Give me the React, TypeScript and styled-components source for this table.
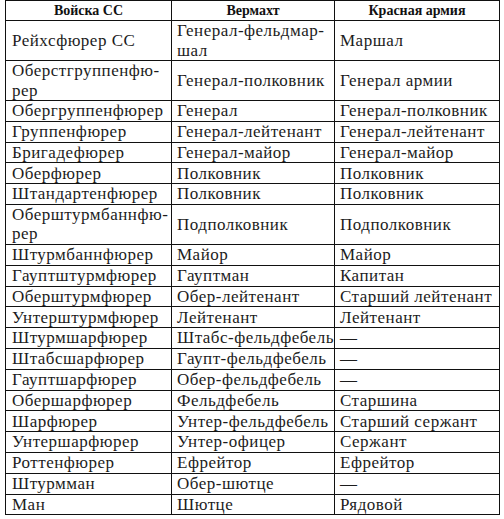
import React from "react";
import styled, { createGlobalStyle } from "styled-components";

const Global = createGlobalStyle`
  html, body { margin: 0; padding: 0; background: #fff; }
  body { font-family: "Liberation Serif", "Times New Roman", serif; color: #1a1a1a; }
`;

const Page = styled.div`
  padding: 0 0 0 5px;
`;

const Grid = styled.div`
  display: grid;
  grid-template-columns: 165px 162px 164px;
  gap: 1px;
  padding: 1px;
  width: max-content;
  background: #111;
`;

const HeadCell = styled.div`
  background: #fff;
  font-family: "Liberation Serif", "Times New Roman", serif;
  font-weight: bold;
  font-size: 14px;
  line-height: 19px;
  height: 19px;
  text-align: center;
  color: #111;
`;

const Cell = styled.div<{ $first?: boolean }>`
  background: #fff;
  display: flex;
  flex-direction: column;
  justify-content: center;
  font-family: "Liberation Serif", "Times New Roman", serif;
  font-size: 17px;
  letter-spacing: 0.5px;
  line-height: 19.2px;
  padding: 0.3px 2px 0.3px ${(p) => (p.$first ? 6 : 5)}px;
  color: #1c1c1c;
  white-space: nowrap;
  overflow: hidden;
`;

const rows: [string, string, string][] = [
  ["Рейхсфюрер СС", "Генерал-фельдмар-\nшал", "Маршал"],
  ["Оберстгруппенфю-\nрер", "Генерал-полковник", "Генерал армии"],
  ["Обергруппенфюрер", "Генерал", "Генерал-полковник"],
  ["Группенфюрер", "Генерал-лейтенант", "Генерал-лейтенант"],
  ["Бригадефюрер", "Генерал-майор", "Генерал-майор"],
  ["Оберфюрер", "Полковник", "Полковник"],
  ["Штандартенфюрер", "Полковник", "Полковник"],
  ["Оберштурмбаннфю-\nрер", "Подполковник", "Подполковник"],
  ["Штурмбаннфюрер", "Майор", "Майор"],
  ["Гауптштурмфюрер", "Гауптман", "Капитан"],
  ["Оберштурмфюрер", "Обер-лейтенант", "Старший лейтенант"],
  ["Унтерштурмфюрер", "Лейтенант", "Лейтенант"],
  ["Штурмшарфюрер", "Штабс-фельдфебель", "—"],
  ["Штабсшарфюрер", "Гаупт-фельдфебель", "—"],
  ["Гауптшарфюрер", "Обер-фельдфебель", "—"],
  ["Обершарфюрер", "Фельдфебель", "Старшина"],
  ["Шарфюрер", "Унтер-фельдфебель", "Старший сержант"],
  ["Унтершарфюрер", "Унтер-офицер", "Сержант"],
  ["Роттенфюрер", "Ефрейтор", "Ефрейтор"],
  ["Штурмман", "Обер-шютце", "—"],
  ["Ман", "Шютце", "Рядовой"],
];

export default function App() {
  return (
    <Page>
      <Global />
      <Grid>
        <HeadCell>Войска СС</HeadCell>
        <HeadCell>Вермахт</HeadCell>
        <HeadCell>Красная армия</HeadCell>
        {rows.map((r, i) =>
          r.map((c, j) => (
            <Cell key={`${i}-${j}`} $first={j === 0}>
              {c.split("\n").map((p, k) => (
                <span key={k}>{p}</span>
              ))}
            </Cell>
          ))
        )}
      </Grid>
    </Page>
  );
}
